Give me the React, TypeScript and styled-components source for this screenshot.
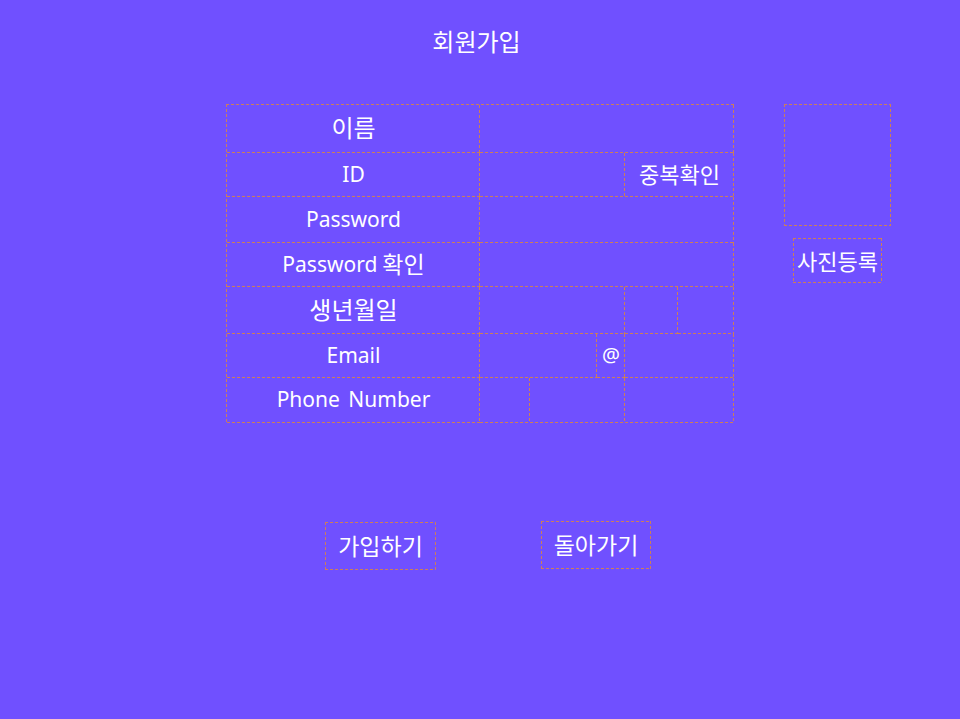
import React from "react";
import styled, { createGlobalStyle, css } from "styled-components";

const Global = createGlobalStyle`
  html, body { margin: 0; padding: 0; background: #7050ff; }
  body { font-family: "Noto Sans", "Noto Sans CJK KR", sans-serif; color: #ffffff; }
`;

const LINE = "#cc7e58";
const dashH = `repeating-linear-gradient(90deg, ${LINE} 0 3px, transparent 3px 5px)`;
const dashV = `repeating-linear-gradient(180deg, ${LINE} 0 3px, transparent 3px 5px)`;

const dashedBox = css`
  background:
    ${dashH} left top / 100% 1px no-repeat,
    ${dashH} left bottom / 100% 1px no-repeat,
    ${dashV} left top / 1px 100% no-repeat,
    ${dashV} right top / 1px 100% no-repeat;
`;

const Page = styled.div`
  min-height: 719px;
  background: #7050ff;
  padding-top: 26px;
  box-sizing: border-box;
`;

const Title = styled.h1`
  margin: 0;
  font-size: 24px;
  font-weight: 400;
  line-height: 32px;
  text-align: center;
  padding-right: 7px;
`;

const Main = styled.div`
  margin-top: 46px;
  display: grid;
  grid-template-columns: 1fr auto 1fr;
  align-items: start;
`;

const Table = styled.div`
  grid-column: 2;
  display: grid;
  grid-template-columns: 253px 50px 67px 28px 53px 56px;
  grid-template-rows: 48px 44px 46px 44px 47px 44px 45px;
  padding: 1px 0 0 1px;
  background:
    ${dashH} left top / 100% 1px no-repeat,
    ${dashV} left top / 1px 100% no-repeat;
`;

const Cell = styled.div<{ $span?: number; $size?: number; $wordGap?: number }>`
  grid-column: span ${(p) => p.$span ?? 1};
  box-sizing: border-box;
  background:
    ${dashH} left bottom / 100% 1px no-repeat,
    ${dashV} right top / 1px 100% no-repeat;
  display: flex;
  align-items: center;
  justify-content: center;
  padding-bottom: 2px;
  font-size: ${(p) => p.$size ?? 21}px;
  word-spacing: ${(p) => p.$wordGap ?? 0}px;
  line-height: 1;
  white-space: nowrap;
`;

const Ko = styled.span`
  font-size: 23px;
  margin-left: 5px;
`;

const Side = styled.div`
  grid-column: 3;
  margin-left: 50px;
  width: 107px;
  display: flex;
  flex-direction: column;
  align-items: center;
  gap: 12px;
`;

const PhotoBox = styled.div`
  width: 107px;
  height: 122px;
  box-sizing: border-box;
  ${dashedBox}
`;

const Button = styled.div<{ $w: number; $h: number; $offset?: number; $size?: number }>`
  width: ${(p) => p.$w}px;
  height: ${(p) => p.$h}px;
  box-sizing: border-box;
  ${dashedBox}
  display: flex;
  align-items: center;
  justify-content: center;
  font-size: ${(p) => p.$size ?? 22}px;
  line-height: 1;
  margin-top: ${(p) => p.$offset ?? 0}px;
`;

const Actions = styled.div`
  margin-top: 98px;
  display: flex;
  justify-content: center;
  align-items: flex-start;
  gap: 105px;
  padding-left: 16px;
`;

export default function App() {
  return (
    <Page>
      <Global />
      <Title>회원가입</Title>
      <Main>
        <Table>
          <Cell $size={24}>이름</Cell>
          <Cell $span={5} />

          <Cell $size={21}>ID</Cell>
          <Cell $span={3} />
          <Cell $span={2} $size={22}>중복확인</Cell>

          <Cell $size={21}>Password</Cell>
          <Cell $span={5} />

          <Cell $size={21}>
            Password<Ko>확인</Ko>
          </Cell>
          <Cell $span={5} />

          <Cell $size={24}>생년월일</Cell>
          <Cell $span={3} />
          <Cell />
          <Cell />

          <Cell $size={21}>Email</Cell>
          <Cell $span={2} />
          <Cell $size={20}>@</Cell>
          <Cell $span={2} />

          <Cell $size={21} $wordGap={3}>Phone Number</Cell>
          <Cell />
          <Cell $span={2} />
          <Cell $span={2} />
        </Table>
        <Side>
          <PhotoBox />
          <Button $w={89} $h={45}>사진등록</Button>
        </Side>
      </Main>
      <Actions>
        <Button $w={111} $h={48} $offset={1} $size={23}>가입하기</Button>
        <Button $w={110} $h={48} $size={23}>돌아가기</Button>
      </Actions>
    </Page>
  );
}
